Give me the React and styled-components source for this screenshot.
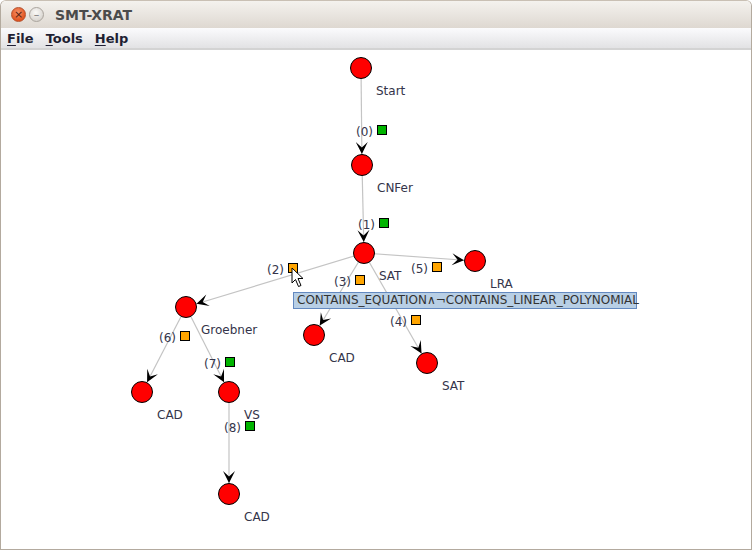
import React from "react";
import styled, { createGlobalStyle } from "styled-components";

const GlobalStyle = createGlobalStyle`
  html, body {
    margin: 0;
    padding: 0;
    background: #ffffff;
  }
  body {
    font-family: "DejaVu Sans", "Liberation Sans", sans-serif;
  }
`;

const TOP = 50;

const nodes = {
  start: { x: 361, y: 68, label: "Start" },
  cnfer: { x: 362, y: 165, label: "CNFer" },
  sat: { x: 364, y: 253, label: "SAT" },
  lra: { x: 475, y: 261, label: "LRA" },
  groebner: { x: 186, y: 307, label: "Groebner" },
  cad1: { x: 314, y: 335, label: "CAD" },
  sat2: { x: 427, y: 363, label: "SAT" },
  cad2: { x: 142, y: 392, label: "CAD" },
  vs: { x: 229, y: 392, label: "VS" },
  cad3: { x: 229, y: 494, label: "CAD" },
};

const edges = [
  { from: "start", to: "cnfer", id: 0, ok: true, lx: 356, ly: 131 },
  { from: "cnfer", to: "sat", id: 1, ok: true, lx: 358, ly: 224 },
  { from: "sat", to: "groebner", id: 2, ok: false, lx: 267, ly: 269 },
  { from: "sat", to: "cad1", id: 3, ok: false, lx: 334, ly: 281 },
  { from: "sat", to: "lra", id: 5, ok: false, lx: 411, ly: 268 },
  { from: "sat", to: "sat2", id: 4, ok: false, lx: 390, ly: 321 },
  { from: "groebner", to: "cad2", id: 6, ok: false, lx: 159, ly: 337 },
  { from: "groebner", to: "vs", id: 7, ok: true, lx: 204, ly: 363 },
  { from: "vs", to: "cad3", id: 8, ok: true, lx: 224, ly: 427 },
];

const R = 10.5;

function arrowPath(a, b) {
  const dx = b.x - a.x;
  const dy = b.y - a.y;
  const len = Math.sqrt(dx * dx + dy * dy);
  const ux = dx / len;
  const uy = dy / len;
  const nx = -uy;
  const ny = ux;
  const tx = b.x - ux * (R + 0.5);
  const ty = b.y - uy * (R + 0.5);
  const p = (k, s) => `${tx - ux * k + nx * s},${ty - uy * k + ny * s}`;
  return `M${tx},${ty} L${p(12, 6)} L${p(6.5, 0)} L${p(12, -6)} Z`;
}

export default function App() {
  return (
    <>
      <GlobalStyle />
      <Window>
        <TitleBar>
          <WinButton $close>×</WinButton>
          <WinButton>–</WinButton>
          <Title>SMT-XRAT</Title>
        </TitleBar>
        <MenuBar>
          <MenuItem><u>F</u>ile</MenuItem>
          <MenuItem><u>T</u>ools</MenuItem>
          <MenuItem><u>H</u>elp</MenuItem>
        </MenuBar>
        <Canvas>
          <EdgeLayer width="751" height="500" viewBox={`0 ${TOP} 751 500`}>
            {edges.map((e) => {
              const a = nodes[e.from];
              const b = nodes[e.to];
              return (
                <g key={e.id}>
                  <line x1={a.x} y1={a.y} x2={b.x} y2={b.y} stroke="#c4c4c4" strokeWidth="1.2" />
                  <path d={arrowPath(a, b)} fill="#000" />
                </g>
              );
            })}
            {Object.entries(nodes).map(([k, n]) => (
              <circle key={k} cx={n.x} cy={n.y} r={R} fill="#ff0000" stroke="#000" strokeWidth="1" />
            ))}
          </EdgeLayer>
          {Object.entries(nodes).map(([k, n]) => (
            <NodeLabel key={k} style={{ left: n.x + 14, top: n.y + 16 - TOP }}>
              {n.label}
            </NodeLabel>
          ))}
          {edges.map((e) => (
            <EdgeLabel key={e.id} style={{ left: e.lx - 1, top: e.ly - 6 - TOP }}>
              ({e.id})
              <Status $ok={e.ok} />
            </EdgeLabel>
          ))}
          <Tooltip>CONTAINS_EQUATION∧¬CONTAINS_LINEAR_POLYNOMIAL</Tooltip>
          <Cursor width="14" height="22" viewBox="0 0 14 22">
            <path d="M1 1 L1 16 L4.5 12.5 L7.5 19.5 L10 18.5 L7 11.5 L12 11.5 Z" fill="#fff" stroke="#000" strokeWidth="1" strokeLinejoin="round" />
          </Cursor>
        </Canvas>
      </Window>
    </>
  );
}

const Window = styled.div`
  width: 752px;
  height: 550px;
  box-sizing: border-box;
  border: 1px solid #b3aa9e;
  border-top-color: #c9c0b4;
  border-radius: 6px 6px 0 0;
  display: flex;
  flex-direction: column;
  overflow: hidden;
  background: #fff;
`;

const TitleBar = styled.div`
  height: 27px;
  flex: none;
  display: flex;
  align-items: center;
  padding-left: 10px;
  gap: 3px;
  background: linear-gradient(#f4f2ee, #ded8d1);
`;

const WinButton = styled.div`
  width: 15px;
  height: 15px;
  border-radius: 50%;
  box-sizing: border-box;
  display: flex;
  align-items: center;
  justify-content: center;
  font-size: 11px;
  line-height: 1;
  color: ${(p) => (p.$close ? "#5a2010" : "#777")};
  background: ${(p) =>
    p.$close
      ? "radial-gradient(circle at 45% 35%, #f6936a, #e2531f 70%)"
      : "radial-gradient(circle at 45% 35%, #fbfaf8, #d8d4cf 75%)"};
  border: 1px solid ${(p) => (p.$close ? "#b5502c" : "#aaa49d")};
`;

const Title = styled.div`
  margin-left: 8px;
  font-weight: bold;
  font-size: 14px;
  color: #4b4b4b;
`;

const MenuBar = styled.div`
  height: 20px;
  flex: none;
  display: flex;
  align-items: center;
  gap: 12px;
  padding-left: 6px;
  background: linear-gradient(#fbfbfd, #e2e2e4);
  border-bottom: 2px solid #d3d3d3;
`;

const MenuItem = styled.span`
  font-weight: bold;
  font-size: 13px;
  color: #1f1f33;
  u {
    text-decoration-thickness: 1px;
    text-underline-offset: 2px;
  }
`;

const Canvas = styled.div`
  position: relative;
  flex: 1;
  background: #fff;
`;

const EdgeLayer = styled.svg`
  position: absolute;
  left: -1px;
  top: 0;
`;

const NodeLabel = styled.span`
  position: absolute;
  font-size: 12px;
  line-height: 14px;
  color: #34344a;
  white-space: nowrap;
`;

const EdgeLabel = styled.span`
  position: absolute;
  display: flex;
  align-items: center;
  gap: 4px;
  font-size: 12px;
  line-height: 14px;
  color: #34344a;
  white-space: nowrap;
`;

const Status = styled.span`
  display: inline-block;
  width: 10px;
  height: 10px;
  box-sizing: border-box;
  border: 1px solid #000;
  background: ${(p) => (p.$ok ? "#00b400" : "#ffa500")};
  margin-top: -4px;
`;

const Tooltip = styled.div`
  position: absolute;
  left: 292px;
  top: 242px;
  width: 344px;
  height: 17px;
  box-sizing: border-box;
  padding-left: 3px;
  background: #b8cfe5;
  border: 1px solid #6389c0;
  font-size: 12px;
  line-height: 15px;
  color: #333;
  white-space: nowrap;
`;

const Cursor = styled.svg`
  position: absolute;
  left: 290px;
  top: 217px;
`;
